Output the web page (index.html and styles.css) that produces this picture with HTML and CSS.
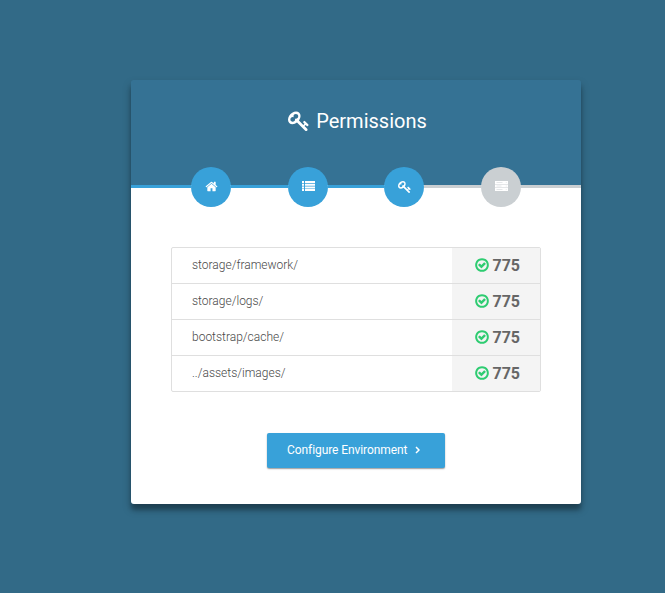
FILE: index.html
```html
<!DOCTYPE html>
<html lang="en">
<head>
<meta charset="utf-8">
<title>Permissions</title>
<link rel="stylesheet" href="styles.css">
</head>
<body>
<svg class="defs" aria-hidden="true">
<symbol id="key" viewBox="0 0 1792 1792"><path d="M832 512q0-80-56-136t-136-56-136 56-56 136q0 42 19 83-41-19-83-19-80 0-136 56t-56 136 56 136 136 56 136-56 56-136q0-42-19-83 41 19 83 19 80 0 136-56t56-136zm851 704q0 17-49 66t-66 49q-9 0-28.5-16t-36.5-33-38.5-40-24.5-26l-96 96 220 220q28 28 28 68 0 42-39 81t-81 39q-40 0-68-28l-671-671q-176 131-365 131-163 0-265.5-102.5t-102.5-265.5q0-160 95-313t248-248 313-95q163 0 265.5 102.5t102.5 265.5q0 189-131 365l355 355 96-96q-3-3-26-24.5t-40-38.5-33-36.5-16-28.5q0-17 49-66t66-49q13 0 23 10 6 6 46 44.5t82 79.5 86.5 86 73 78 28.5 41z"/></symbol>
<symbol id="home" viewBox="0 0 1792 1792"><path d="M1472 992v480q0 26-19 45t-45 19h-384v-384h-256v384h-384q-26 0-45-19t-19-45v-480q0-1 .5-3t.5-3l575-474 575 474q1 2 1 6zm223-69l-62 74q-8 9-21 11h-3q-13 0-21-7l-692-577-692 577q-12 8-24 7-13-2-21-11l-62-74q-8-10-7-23.5t11-21.5l719-599q32-26 76-26t76 26l244 204v-195q0-14 9-23t23-9h192q14 0 23 9t9 23v408l219 182q10 8 11 21.5t-7 23.5z"/></symbol>
<symbol id="check" viewBox="0 0 1792 1792"><path d="M1299 813l-422 422q-19 19-45 19t-45-19l-294-294q-19-19-19-45t19-45l102-102q19-19 45-19t45 19l147 147 275-275q19-19 45-19t45 19l102 102q19 19 19 45t-19 45zm141 83q0-148-73-273t-198-198-273-73-273 73-198 198-73 273 73 273 198 198 273 73 273-73 198-198 73-273zm224 0q0 209-103 385.5t-279.5 279.5-385.5 103-385.5-103-279.5-279.5-103-385.5 103-385.5 279.5-279.5 385.5-103 385.5 103 279.5 279.5 103 385.5z"/></symbol>
</svg>
<main class="card">
  <header class="header">
    <svg class="title-icon"><use href="#key"/></svg>
    <h1 class="title">Permissions</h1>
  </header>
  <ol class="steps">
    <li class="line edge done"></li>
    <li class="step done"><svg class="icon home"><use href="#home"/></svg></li>
    <li class="line done"></li>
    <li class="step done"><svg class="list-icon" viewBox="0 0 13 10"><path d="M0 0h2v2H0zM3 0h10v2H3zM0 2.7h2v2H0zM3 2.7h10v2H3zM0 5.4h2v2H0zM3 5.4h10v2H3zM0 8.1h2V10H0zM3 8.1h10V10H3z"/></svg></li>
    <li class="line done"></li>
    <li class="step done"><svg class="icon"><use href="#key"/></svg></li>
    <li class="line"></li>
    <li class="step"><svg class="list-icon" viewBox="0 0 13 10"><path d="M0 0h13v3H0zM0 3.5h13v3H0zM0 7h13v3H0z"/><path class="slots" d="M1.5 1.5h6M10.8 1.5h.8M1.5 5h5M10.8 5h.8M1.5 8.5h6M10.8 8.5h.8"/></svg></li>
    <li class="line edge"></li>
  </ol>
  <section class="content">
    <ul class="list">
      <li class="row"><span class="path">storage/framework/</span><span class="mode"><svg class="check"><use href="#check"/></svg>775</span></li>
      <li class="row"><span class="path">storage/logs/</span><span class="mode"><svg class="check"><use href="#check"/></svg>775</span></li>
      <li class="row"><span class="path">bootstrap/cache/</span><span class="mode"><svg class="check"><use href="#check"/></svg>775</span></li>
      <li class="row"><span class="path">../assets/images/</span><span class="mode"><svg class="check"><use href="#check"/></svg>775</span></li>
    </ul>
    <a class="button">Configure Environment<svg class="chevron" viewBox="0 0 5 8"><path d="M1 1l3 3-3 3"/></svg></a>
  </section>
</main>
</body>
</html>
```

FILE: styles.css
```css
* { box-sizing: border-box; }
body {
  margin: 0;
  height: 593px;
  padding: 80px 84px 0 131px;
  background: #326a87;
  font-family: Roboto, "Liberation Sans", sans-serif;
}
ul, ol, h1 { margin: 0; padding: 0; list-style: none; }
svg { display: block; fill: currentColor; flex: none; }
.defs { position: absolute; width: 0; height: 0; }
.card {
  width: 450px;
  height: 424px;
  background: linear-gradient(#357294 105px, #fff 105px);
  border-radius: 3px;
  box-shadow: 0 5px 10px rgba(0, 0, 0, .22), 0 6px 4px rgba(0, 0, 0, .26);
}
.header {
  height: 105px;
  display: flex;
  justify-content: center;
  padding: 30px 0 0 3px;
  color: #fff;
}
.title-icon { width: 22px; height: 22px; margin-right: 6px; }
.title { font-size: 20px; line-height: 23px; font-weight: 400; }
.steps { display: flex; align-items: center; height: 40px; margin-top: -18px; }
.line { flex: 1; height: 3px; margin-bottom: 1px; background: #cacfd2; }
.edge { flex: none; width: 60px; }
.step {
  width: 40px;
  height: 40px;
  border-radius: 50%;
  display: flex;
  align-items: center;
  justify-content: center;
  background: #cacfd2;
  color: #fff;
}
.done { background: #38a1d9; }
.icon { width: 13.5px; height: 13.5px; margin: 0 0 1px 1px; }
.home { margin-left: 0; width: 13px; height: 13px; }
.list-icon { width: 13px; height: 10px; margin: 0 0 2px 1px; }
.slots { fill: none; stroke: #cacfd2; stroke-width: .5; }
.content { padding: 40px 40px 0; display: flex; flex-direction: column; align-items: center; }
.list { width: 370px; border: 1px solid #dfdfdf; border-radius: 2px; overflow: hidden; }
.row { display: flex; height: 36px; border-bottom: 1px solid #dfdfdf; }
.row:last-child { height: 35px; border-bottom: 0; }
.path { flex: 1; padding-left: 20px; font-size: 12px; line-height: 35px; font-weight: 300; color: #484848; }
.mode {
  width: 88px;
  display: flex;
  align-items: center;
  padding-left: 22px;
  background: #f4f4f4;
  color: #666;
  font-size: 16px;
  font-weight: 700;
}
.check { width: 16px; height: 16px; margin: 0 2.5px 1px 0; color: #2ecc71; }
.button {
  display: flex;
  align-items: center;
  width: 178px;
  height: 35px;
  margin-top: 41px;
  padding: 0 0 1px 20px;
  border-radius: 2px;
  background: #38a1d9;
  color: #fff;
  font-size: 12px;
  letter-spacing: -.08px;
  box-shadow: 0 1px 1.5px rgba(0, 0, 0, .4);
}
.chevron { width: 5px; height: 8px; margin-left: 8px; fill: none; stroke: currentColor; stroke-width: 1.5; }
```
